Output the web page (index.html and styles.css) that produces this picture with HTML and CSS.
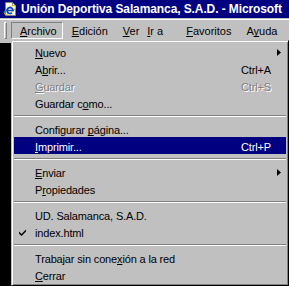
FILE: index.html
```html
<!DOCTYPE html>
<html lang="es">
<head>
    <meta charset="UTF-8">
    <meta name="viewport" content="width=device-width, initial-scale=1.0">
    <title>Unión Deportiva Salamanca, S.A.D.</title>
    <link rel="stylesheet" href="styles.css">
</head>
<body>
    <div class="window">
        <!-- Barra de título -->
        <div class="titlebar">
            <svg class="app-icon" width="16" height="16" viewBox="0 0 16 16">
                <path d="M3.5 1.5h7l3 3v10h-10z" fill="#fff" stroke="#808080"/>
                <path d="M10.5 1.5v3h3" fill="none" stroke="#808080"/>
                <ellipse cx="8" cy="9" rx="6.5" ry="2.5" fill="none" stroke="#d8c000" transform="rotate(-35 8 9)"/>
                <path d="M5 9.5h6a3 3 0 1 0 -1 2.3" fill="none" stroke="#0048d0" stroke-width="1.7"/>
                <path d="M2 12c1 -2 2 -3 3 -3" fill="none" stroke="#008080"/>
            </svg>
            <span class="title">Unión Deportiva Salamanca, S.A.D. - Microsoft</span>
        </div>

        <!-- Barra de menús -->
        <div class="menubar">
            <span class="grip"></span>
            <span class="menu-item open"><u>A</u>rchivo</span>
            <span class="menu-item"><u>E</u>dición</span>
            <span class="menu-item"><u>V</u>er</span>
            <span class="menu-item goto"><u>I</u>r a</span>
            <span class="menu-item"><u>F</u>avoritos</span>
            <span class="menu-item">A<u>y</u>uda</span>
        </div>

        <div class="content"></div>

        <!-- Menú Archivo desplegado -->
        <div class="dropdown">
            <div class="row">
                <span></span><span><u>N</u>uevo</span><span></span>
                <svg class="arrow" width="4" height="7" viewBox="0 0 4 7"><path d="M0 0l4 3.5L0 7z"/></svg>
            </div>
            <div class="row"><span></span><span>A<u>b</u>rir...</span><span>Ctrl+A</span><span></span></div>
            <div class="row disabled"><span></span><span><u>G</u>uardar</span><span>Ctrl+S</span><span></span></div>
            <div class="row"><span></span><span>Guardar c<u>o</u>mo...</span><span></span><span></span></div>
            <div class="sep"></div>
            <div class="row"><span></span><span>Configurar <u>p</u>ágina...</span><span></span><span></span></div>
            <div class="row active"><span></span><span><u>I</u>mprimir...</span><span>Ctrl+P</span><span></span></div>
            <div class="sep"></div>
            <div class="row">
                <span></span><span><u>E</u>nviar</span><span></span>
                <svg class="arrow" width="4" height="7" viewBox="0 0 4 7"><path d="M0 0l4 3.5L0 7z"/></svg>
            </div>
            <div class="row"><span></span><span>P<u>r</u>opiedades</span><span></span><span></span></div>
            <div class="sep"></div>
            <div class="row"><span></span><span>UD. Salamanca, S.A.D.</span><span></span><span></span></div>
            <div class="row">
                <svg class="check" width="7" height="7" viewBox="0 0 7 7"><path d="M0 2.5l2.5 2.5L7 0.5v2L2.5 7 0 4.5z"/></svg>
                <span>index.html</span><span></span><span></span>
            </div>
            <div class="sep"></div>
            <div class="row"><span></span><span>Trabajar sin cone<u>x</u>ión a la red</span><span></span><span></span></div>
            <div class="row"><span></span><span><u>C</u>errar</span><span></span><span></span></div>
        </div>
    </div>
</body>
</html>
```

FILE: styles.css
```css
body {
    margin: 0;
    font-family: "Liberation Sans", Arial, sans-serif;
    font-size: 11px;
    background-color: #000;
}

u {
    text-decoration-skip-ink: none;
}

.window {
    position: relative;
    width: 289px;
    height: 286px;
    overflow: hidden;
    background-color: #000;
}

.titlebar {
    height: 18px;
    display: flex;
    align-items: center;
    gap: 3px;
    padding-left: 2px;
    background-color: #000080;
    color: #fff;
    font-size: 12px;
    font-weight: bold;
    letter-spacing: -0.1px;
    white-space: nowrap;
}

.app-icon {
    flex-shrink: 0;
}

.menubar {
    height: 25px;
    box-sizing: border-box;
    display: flex;
    align-items: flex-start;
    padding: 4px 0 0 4px;
    background: linear-gradient(#c0c0c0 1px, #fff 1px, #fff 2px, #c0c0c0 2px);
    color: #000;
    white-space: nowrap;
}

.grip {
    width: 1px;
    height: 15px;
    border: 1px solid;
    border-color: #fff #808080 #808080 #fff;
    margin-right: 4px;
}

.menu-item {
    height: 17px;
    box-sizing: border-box;
    border: 1px solid transparent;
    padding: 2px 5px 0 8px;
    line-height: 13px;
}

.menu-item.open {
    border-color: #808080 #fff #fff #808080;
}

.menu-item.goto {
    margin-left: -7px;
    margin-right: 8px;
}

.content {
    height: 243px;
    background-color: #000;
}

.dropdown {
    position: absolute;
    left: 11px;
    top: 40px;
    width: 278px;
    height: 246px;
    box-sizing: border-box;
    padding: 2px;
    background-color: #c0c0c0;
    border: 1px solid;
    border-color: #c0c0c0 #000 #000 #c0c0c0;
    box-shadow: inset 1px 1px #fff, inset -1px -1px #808080;
    color: #000;
    letter-spacing: -0.15px;
}

.row {
    display: grid;
    grid-template-columns: 21px 206px 1fr 14px;
    align-items: center;
    height: 17px;
    box-sizing: border-box;
    padding-top: 2px;
    white-space: nowrap;
}

.row.active {
    background-color: #000080;
    color: #fff;
}

.row.disabled {
    color: #808080;
    text-shadow: 1px 1px 0 #fff;
}

.check {
    margin-left: 5px;
}

.arrow {
    margin-left: 5px;
}

.sep {
    height: 9px;
    box-sizing: border-box;
    padding-top: 4px;
}

.sep::before {
    content: "";
    display: block;
    border-top: 1px solid #808080;
    border-bottom: 1px solid #fff;
}
```
